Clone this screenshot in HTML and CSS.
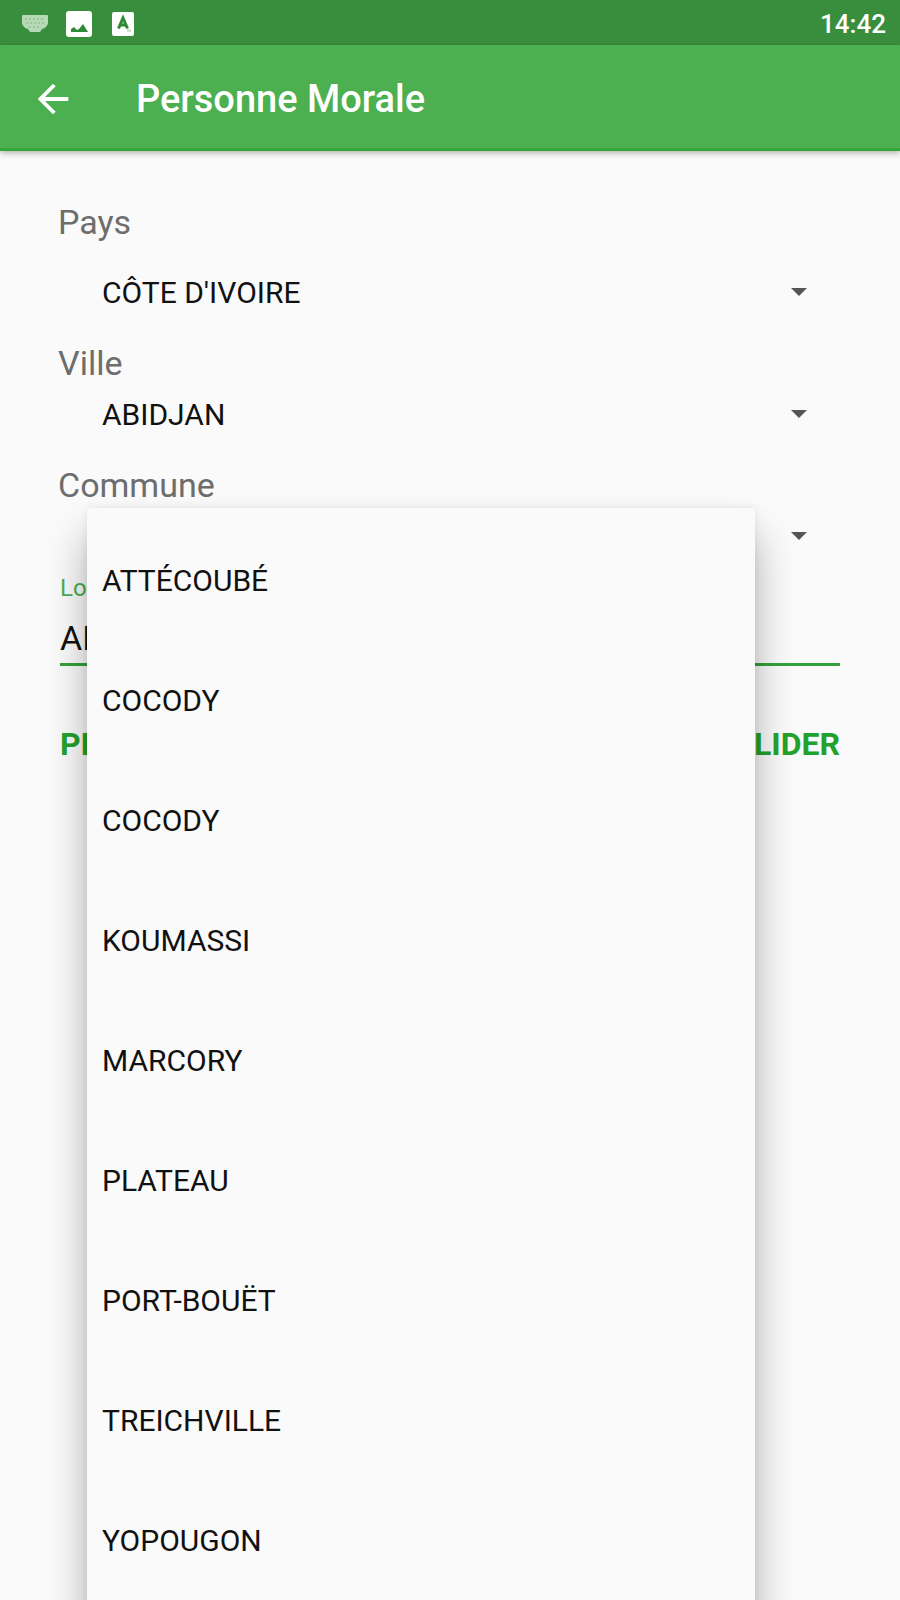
FILE: index.html
```
<!DOCTYPE html>
<html lang="fr">
<head>
<meta charset="UTF-8">
<meta name="viewport" content="width=device-width, initial-scale=1.0">
<title>Personne Morale</title>
<link rel="stylesheet" href="styles.css">
</head>
<body>
<div class="statusBar">
  <svg class="keyboardIcon" width="26" height="17" viewBox="0 0 26 17" aria-hidden="true">
    <path d="M1 0h24q1 0 1 1v7q-1 5-6 6l-2 3H8l-2-3q-5-1-6-6V1q0-1 1-1z" fill="#b5dab5"/>
    <path d="M3 4h20M4 8h18M7 12h12" stroke="#7fb681" stroke-width="1" stroke-dasharray="2 2"/>
  </svg>
  <svg width="26" height="26" viewBox="0 0 26 26" aria-hidden="true">
    <rect width="26" height="26" rx="3" fill="#fff"/>
    <path d="M5 21v-3l3-2 3 3 2-1 4-5 5 8z" fill="#2f8a35"/>
  </svg>
  <svg width="24" height="24" viewBox="0 0 24 24" aria-hidden="true">
    <rect width="22" height="24" x="1" rx="2" fill="#fff"/>
    <path d="M7.500 16.500L12 6l4.500 10.500M9 13h6" fill="none" stroke="#2f8a35" stroke-width="3"/>
    <path d="M16 17h4v3h-4z" fill="#cfe5cf"/>
  </svg>
  <time class="clock">14:42</time>
</div>
<header class="appBar">
  <button type="button" class="backBtn" aria-label="Retour">
    <svg width="46" height="46" viewBox="0 0 24 24" aria-hidden="true"><path d="M20 11H7.830l5.590-5.590L12 4l-8 8 8 8 1.410-1.410L7.830 13H20v-2z" fill="#fff"/></svg>
  </button>
  <h1>Personne Morale</h1>
</header>
<form class="addressForm">
  <div class="field country">
    <label for="pays">Pays</label>
    <div class="spinner">
      <select id="pays"><option>CÔTE D'IVOIRE</option></select>
    </div>
  </div>
  <div class="field">
    <label for="ville">Ville</label>
    <div class="spinner">
      <select id="ville"><option>ABIDJAN</option></select>
    </div>
  </div>
  <div class="field">
    <label for="commune">Commune</label>
    <div class="spinner">
      <select id="commune"><option></option></select>
      <ul class="dropdown" role="listbox" aria-label="Commune">
        <li role="option">ATTÉCOUBÉ</li>
        <li role="option">COCODY</li>
        <li role="option">COCODY</li>
        <li role="option">KOUMASSI</li>
        <li role="option">MARCORY</li>
        <li role="option">PLATEAU</li>
        <li role="option">PORT-BOUËT</li>
        <li role="option">TREICHVILLE</li>
        <li role="option">YOPOUGON</li>
      </ul>
    </div>
  </div>
  <div class="textField">
    <label for="localisation">Localisation</label>
    <input type="text" id="localisation" value="ABIDJAN">
  </div>
  <div class="buttonGroup">
    <button type="button">PRÉCÉDENT</button>
    <button type="submit">VALIDER</button>
  </div>
</form>
</body>
</html>
```
FILE: styles.css
```
* { box-sizing:border-box; }
html, body { margin:0; padding:0; }
body { height:100vh; overflow:hidden; font-family:Roboto,"Liberation Sans",sans-serif; background:#fafafa; color:#111; }
button, input, select { font-family:inherit; margin:0; padding:0; border:none; background:transparent; color:inherit; }

.statusBar { display:flex; align-items:center; gap:19px; height:45px; padding:2px 14px 0 22px; background:#398e3d; }
.keyboardIcon { margin-right:-1px; }
.clock { margin-left:auto; color:#fff; font-size:26px; font-weight:500; line-height:32px; }

.appBar { position:relative; display:flex; align-items:center; gap:60px; height:106px; padding:4px 30px 0; background:#4caf50; border-bottom:3px solid #32a839; box-shadow:0 2px 6px rgba(0,0,0,.3); }
.backBtn { display:flex; cursor:pointer; }
.appBar h1 { margin:0; color:#fff; font-size:38px; font-weight:500; line-height:48px; }

.addressForm { padding:50px 58px 0; }
.field { display:flex; flex-direction:column; margin-bottom:20px; }
.field label { color:#6d6d6d; font-size:34px; line-height:42px; }
.country { gap:19px; }
.spinner { position:relative; }
.spinner::after { content:''; position:absolute; top:26px; right:35px; border:8px solid transparent; border-top-color:#555; border-bottom:none; pointer-events:none; }
.spinner select { display:block; width:100%; height:60px; padding:0 44px; font-size:30px; appearance:none; -webkit-appearance:none; }

.dropdown { position:absolute; z-index:1; top:2px; left:29px; right:87px; margin:0; padding:13px 15px; list-style:none; background:#fafafa; border-radius:3px; box-shadow:0 0 8px rgba(0,0,0,.08), 0 28px 40px rgba(0,0,0,.3); }
.dropdown li { font-size:30px; line-height:120px; }

.textField { display:flex; flex-direction:column; gap:12px; margin-top:-10px; padding:0 2px; }
.textField label { color:#4caf50; font-size:24px; line-height:24px; }
.textField input { width:100%; height:54px; font-size:34px; border-bottom:3px solid #32a33a; outline:none; }

.buttonGroup { display:flex; justify-content:space-between; margin-top:58px; padding:0 2px; }
.buttonGroup button { color:#23a22b; font-size:32px; font-weight:700; line-height:40px; cursor:pointer; }
```
